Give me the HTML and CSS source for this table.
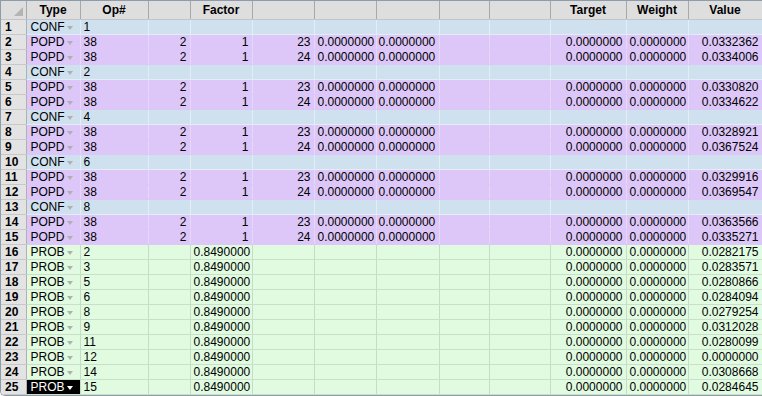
FILE: index.html
```html
<!DOCTYPE html>
<html>
<head>
<meta charset="utf-8">
<link rel="stylesheet" href="styles.css">
</head>
<body>
<div class="frame">
<table class="grid">
<colgroup>
<col class="c0"><col class="c1"><col class="c2"><col class="c3"><col class="c4"><col class="c5"><col class="c6"><col class="c7"><col class="c8"><col class="c9"><col class="c10"><col class="c11"><col class="c12">
</colgroup>
<thead>
<tr><th class="corner"><span class="tri"></span></th><th>Type</th><th>Op#</th><th></th><th>Factor</th><th></th><th></th><th></th><th></th><th></th><th>Target</th><th>Weight</th><th>Value</th></tr>
</thead>
<tbody>
<tr class="conf"><td class="rn">1</td><td class="ty">CONF<span class="dd"></span></td><td>1</td><td></td><td></td><td></td><td></td><td></td><td></td><td></td><td></td><td></td><td></td></tr>
<tr class="popd"><td class="rn">2</td><td class="ty">POPD<span class="dd"></span></td><td>38</td><td class="r">2</td><td class="r">1</td><td class="r">23</td><td class="r">0.0000000</td><td class="l">0.0000000</td><td></td><td></td><td class="r">0.0000000</td><td class="r">0.0000000</td><td class="r">0.0332362</td></tr>
<tr class="popd"><td class="rn">3</td><td class="ty">POPD<span class="dd"></span></td><td>38</td><td class="r">2</td><td class="r">1</td><td class="r">24</td><td class="r">0.0000000</td><td class="l">0.0000000</td><td></td><td></td><td class="r">0.0000000</td><td class="r">0.0000000</td><td class="r">0.0334006</td></tr>
<tr class="conf"><td class="rn">4</td><td class="ty">CONF<span class="dd"></span></td><td>2</td><td></td><td></td><td></td><td></td><td></td><td></td><td></td><td></td><td></td><td></td></tr>
<tr class="popd"><td class="rn">5</td><td class="ty">POPD<span class="dd"></span></td><td>38</td><td class="r">2</td><td class="r">1</td><td class="r">23</td><td class="r">0.0000000</td><td class="l">0.0000000</td><td></td><td></td><td class="r">0.0000000</td><td class="r">0.0000000</td><td class="r">0.0330820</td></tr>
<tr class="popd"><td class="rn">6</td><td class="ty">POPD<span class="dd"></span></td><td>38</td><td class="r">2</td><td class="r">1</td><td class="r">24</td><td class="r">0.0000000</td><td class="l">0.0000000</td><td></td><td></td><td class="r">0.0000000</td><td class="r">0.0000000</td><td class="r">0.0334622</td></tr>
<tr class="conf"><td class="rn">7</td><td class="ty">CONF<span class="dd"></span></td><td>4</td><td></td><td></td><td></td><td></td><td></td><td></td><td></td><td></td><td></td><td></td></tr>
<tr class="popd"><td class="rn">8</td><td class="ty">POPD<span class="dd"></span></td><td>38</td><td class="r">2</td><td class="r">1</td><td class="r">23</td><td class="r">0.0000000</td><td class="l">0.0000000</td><td></td><td></td><td class="r">0.0000000</td><td class="r">0.0000000</td><td class="r">0.0328921</td></tr>
<tr class="popd"><td class="rn">9</td><td class="ty">POPD<span class="dd"></span></td><td>38</td><td class="r">2</td><td class="r">1</td><td class="r">24</td><td class="r">0.0000000</td><td class="l">0.0000000</td><td></td><td></td><td class="r">0.0000000</td><td class="r">0.0000000</td><td class="r">0.0367524</td></tr>
<tr class="conf"><td class="rn">10</td><td class="ty">CONF<span class="dd"></span></td><td>6</td><td></td><td></td><td></td><td></td><td></td><td></td><td></td><td></td><td></td><td></td></tr>
<tr class="popd"><td class="rn">11</td><td class="ty">POPD<span class="dd"></span></td><td>38</td><td class="r">2</td><td class="r">1</td><td class="r">23</td><td class="r">0.0000000</td><td class="l">0.0000000</td><td></td><td></td><td class="r">0.0000000</td><td class="r">0.0000000</td><td class="r">0.0329916</td></tr>
<tr class="popd"><td class="rn">12</td><td class="ty">POPD<span class="dd"></span></td><td>38</td><td class="r">2</td><td class="r">1</td><td class="r">24</td><td class="r">0.0000000</td><td class="l">0.0000000</td><td></td><td></td><td class="r">0.0000000</td><td class="r">0.0000000</td><td class="r">0.0369547</td></tr>
<tr class="conf"><td class="rn">13</td><td class="ty">CONF<span class="dd"></span></td><td>8</td><td></td><td></td><td></td><td></td><td></td><td></td><td></td><td></td><td></td><td></td></tr>
<tr class="popd"><td class="rn">14</td><td class="ty">POPD<span class="dd"></span></td><td>38</td><td class="r">2</td><td class="r">1</td><td class="r">23</td><td class="r">0.0000000</td><td class="l">0.0000000</td><td></td><td></td><td class="r">0.0000000</td><td class="r">0.0000000</td><td class="r">0.0363566</td></tr>
<tr class="popd"><td class="rn">15</td><td class="ty">POPD<span class="dd"></span></td><td>38</td><td class="r">2</td><td class="r">1</td><td class="r">24</td><td class="r">0.0000000</td><td class="l">0.0000000</td><td></td><td></td><td class="r">0.0000000</td><td class="r">0.0000000</td><td class="r">0.0335271</td></tr>
<tr class="prob"><td class="rn">16</td><td class="ty">PROB<span class="dd"></span></td><td>2</td><td></td><td class="r">0.8490000</td><td></td><td></td><td></td><td></td><td></td><td class="r">0.0000000</td><td class="r">0.0000000</td><td class="r">0.0282175</td></tr>
<tr class="prob"><td class="rn">17</td><td class="ty">PROB<span class="dd"></span></td><td>3</td><td></td><td class="r">0.8490000</td><td></td><td></td><td></td><td></td><td></td><td class="r">0.0000000</td><td class="r">0.0000000</td><td class="r">0.0283571</td></tr>
<tr class="prob"><td class="rn">18</td><td class="ty">PROB<span class="dd"></span></td><td>5</td><td></td><td class="r">0.8490000</td><td></td><td></td><td></td><td></td><td></td><td class="r">0.0000000</td><td class="r">0.0000000</td><td class="r">0.0280866</td></tr>
<tr class="prob"><td class="rn">19</td><td class="ty">PROB<span class="dd"></span></td><td>6</td><td></td><td class="r">0.8490000</td><td></td><td></td><td></td><td></td><td></td><td class="r">0.0000000</td><td class="r">0.0000000</td><td class="r">0.0284094</td></tr>
<tr class="prob"><td class="rn">20</td><td class="ty">PROB<span class="dd"></span></td><td>8</td><td></td><td class="r">0.8490000</td><td></td><td></td><td></td><td></td><td></td><td class="r">0.0000000</td><td class="r">0.0000000</td><td class="r">0.0279254</td></tr>
<tr class="prob"><td class="rn">21</td><td class="ty">PROB<span class="dd"></span></td><td>9</td><td></td><td class="r">0.8490000</td><td></td><td></td><td></td><td></td><td></td><td class="r">0.0000000</td><td class="r">0.0000000</td><td class="r">0.0312028</td></tr>
<tr class="prob"><td class="rn">22</td><td class="ty">PROB<span class="dd"></span></td><td>11</td><td></td><td class="r">0.8490000</td><td></td><td></td><td></td><td></td><td></td><td class="r">0.0000000</td><td class="r">0.0000000</td><td class="r">0.0280099</td></tr>
<tr class="prob"><td class="rn">23</td><td class="ty">PROB<span class="dd"></span></td><td>12</td><td></td><td class="r">0.8490000</td><td></td><td></td><td></td><td></td><td></td><td class="r">0.0000000</td><td class="r">0.0000000</td><td class="r">0.0000000</td></tr>
<tr class="prob"><td class="rn">24</td><td class="ty">PROB<span class="dd"></span></td><td>14</td><td></td><td class="r">0.8490000</td><td></td><td></td><td></td><td></td><td></td><td class="r">0.0000000</td><td class="r">0.0000000</td><td class="r">0.0308668</td></tr>
<tr class="prob"><td class="rn">25</td><td class="ty sel">PROB<span class="dd"></span></td><td>15</td><td></td><td class="r">0.8490000</td><td></td><td></td><td></td><td></td><td></td><td class="r">0.0000000</td><td class="r">0.0000000</td><td class="r">0.0284645</td></tr>
</tbody>
</table>
</div>
</body>
</html>
```

FILE: styles.css
```css
html, body {
  margin: 0;
  padding: 0;
  background: #ffffff;
}
.frame {
  width: 762px;
  height: 396px;
  box-sizing: border-box;
  border-top: 1px solid #8d9cad;
  border-left: 1px solid #8d9cad;
  border-bottom: 1px solid #8d9cad;
  border-bottom-left-radius: 5px;
  overflow: hidden;
  background: #ffffff;
}
.grid {
  border-collapse: collapse;
  table-layout: fixed;
  width: 761px;
  font-family: "Liberation Sans", Arial, sans-serif;
  font-size: 12px;
  color: #000;
}
.c0 { width: 25px; }
.c1 { width: 54px; }
.c2 { width: 68px; }
.c3 { width: 42px; }
.c4 { width: 62px; }
.c5 { width: 62px; }
.c6 { width: 62px; }
.c7 { width: 63px; }
.c8 { width: 50px; }
.c9 { width: 61px; }
.c10 { width: 76px; }
.c11 { width: 62px; }
.c12 { width: 74px; }

th {
  height: 18px;
  padding: 0;
  background: #dedede;
  border-right: 1px solid #a9a9a9;
  border-bottom: 1px solid #c4c4c4;
  font-weight: bold;
  text-align: center;
  line-height: 18px;
  white-space: nowrap;
}
th.corner {
  position: relative;
}
.tri {
  position: absolute;
  right: 3px;
  bottom: 3px;
  width: 0;
  height: 0;
  border-left: 9px solid transparent;
  border-bottom: 9px solid #b4b4b4;
}
td {
  height: 14px;
  padding: 0 3px;
  line-height: 14px;
  white-space: nowrap;
  overflow: hidden;
  border-right: 1px solid transparent;
  border-bottom: 1px solid transparent;
}
td.r { text-align: right; }
td.l { text-align: left; padding-left: 2px; }

td.rn {
  background: #e3e3e3;
  font-weight: bold;
  padding: 0 0 0 4px;
  border-right: 1px solid #b0b0b0;
  border-bottom: 1px solid #c8c8c8;
}
td.ty {
  position: relative;
  padding-left: 4px;
}
.dd {
  position: absolute;
  right: 7px;
  top: 6px;
  width: 0;
  height: 0;
  border-left: 3px solid transparent;
  border-right: 3px solid transparent;
  border-top: 4px solid #b0b0b0;
}
td.sel {
  background: #000000;
  color: #ffffff;
}
td.sel .dd {
  border-top-color: #ffffff;
}

tr.conf td { background: #cfe1ee; border-right-color: #e2edf5; border-bottom-color: #e2edf5; }
tr.popd td { background: #dcc7f8; border-right-color: #e6d8fb; border-bottom-color: #dcc7f8; }
tr.prob td { background: #e1fbe1; border-right-color: #c6dcc6; border-bottom-color: #cadfca; }
tr td.rn { background: #e3e3e3; border-right-color: #b0b0b0; border-bottom-color: #c8c8c8; }
tr td.sel { background: #000000; }
```
